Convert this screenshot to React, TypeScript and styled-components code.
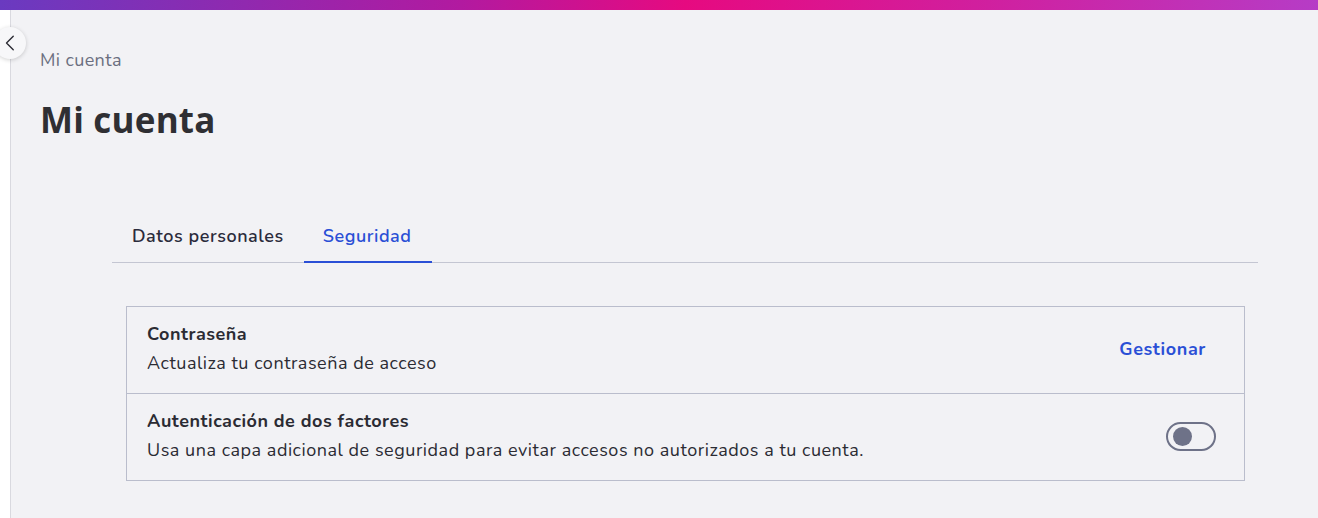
import React, { useState } from "react";
import styled, { createGlobalStyle } from "styled-components";

const GlobalStyle = createGlobalStyle`
  html, body { margin: 0; padding: 0; background: #f2f2f5; }
  body { font-family: "Nunito", Lato, "Open Sans", sans-serif; color: #2b2b33; }
  * { box-sizing: border-box; }
`;

const Shell = styled.div`
  width: 1318px;
  height: 518px;
  display: flex;
  flex-direction: column;
  overflow: hidden;
  background: #f2f2f5;
`;

const TopBar = styled.div`
  height: 10px;
  flex: none;
  background: linear-gradient(90deg, #6a3ac0 0%, #b21aa0 35%, #e60a80 52%, #d0209f 75%, #b63cc6 100%);
`;

const Body = styled.div`
  flex: 1;
  display: flex;
  position: relative;
`;

const SideStrip = styled.div`
  width: 11px;
  flex: none;
  background: #ffffff;
  border-right: 1px solid #d9d9df;
`;

const BackButton = styled.button`
  position: absolute;
  left: -6px;
  top: 17px;
  width: 32px;
  height: 32px;
  border-radius: 50%;
  border: none;
  background: #f7f7f9;
  box-shadow: 0 1px 4px rgba(0, 0, 0, 0.18);
  display: flex;
  align-items: center;
  justify-content: center;
  padding: 0 0 0 2px;
  color: #2b2b33;
  cursor: pointer;
`;

const Main = styled.main`
  flex: 1;
  padding: 38px 60px 0 29px;
  display: flex;
  flex-direction: column;
`;

const Breadcrumb = styled.div`
  font-size: 18px;
  line-height: 24px;
  letter-spacing: 0.4px;
  color: #6b6f80;
`;

const Title = styled.h1`
  margin: 26px 0 0 0;
  font-family: "Open Sans", Lato, sans-serif;
  font-size: 35px;
  line-height: 44px;
  font-weight: 700;
  color: #2f2f33;
  letter-spacing: 0.2px;
`;

const Content = styled.div`
  margin: 71px 0 0 72px;
  width: 1146px;
`;

const Tabs = styled.div`
  display: flex;
  border-bottom: 1px solid #c4c6d2;
  padding-left: 1px;
`;

const Tab = styled.button<{ $active?: boolean }>`
  background: none;
  border: none;
  font-family: inherit;
  font-size: 18px;
  font-weight: 600;
  letter-spacing: 0.55px;
  padding: 11px 20px 13px 19px;
  color: ${(p) => (p.$active ? "#2a4fd6" : "#2b2b3b")};
  border-bottom: 2px solid ${(p) => (p.$active ? "#2a4fd6" : "transparent")};
  margin-bottom: -1px;
  cursor: pointer;
`;

const Card = styled.div`
  margin: 43px 13px 0 14px;
  border: 1px solid #babdcc;
`;

const Row = styled.div`
  display: flex;
  align-items: center;
  justify-content: space-between;
  padding: 14px 28px 16px 20px;
  min-height: 86px;
  & + & {
    border-top: 1px solid #babdcc;
    min-height: 87px;
  }
`;

const RowText = styled.div`
  display: flex;
  flex-direction: column;
  gap: 4px;
`;

const RowTitle = styled.div`
  font-size: 18px;
  line-height: 25px;
  font-weight: 700;
  letter-spacing: 0.5px;
  color: #2b2b33;
`;

const RowDesc = styled.div`
  font-size: 18px;
  line-height: 25px;
  letter-spacing: 0.53px;
  color: #2b2b33;
`;

const LinkButton = styled.button`
  background: none;
  border: none;
  font-family: inherit;
  font-size: 18px;
  font-weight: 700;
  letter-spacing: 0.6px;
  color: #2a4fd6;
  padding: 8px 10px;
  cursor: pointer;
`;

const Toggle = styled.button<{ $on: boolean }>`
  width: 50px;
  height: 29px;
  border-radius: 15px;
  border: 2px solid #6e7288;
  background: ${(p) => (p.$on ? "#2a4fd6" : "transparent")};
  padding: 0 3px;
  display: flex;
  align-items: center;
  justify-content: ${(p) => (p.$on ? "flex-end" : "flex-start")};
  cursor: pointer;
`;

const Knob = styled.span<{ $on: boolean }>`
  width: 19px;
  height: 19px;
  border-radius: 50%;
  background: ${(p) => (p.$on ? "#ffffff" : "#6e7288")};
  margin-left: 2px;
`;

export default function App() {
  const [tab, setTab] = useState(1);
  const [twoFa, setTwoFa] = useState(false);
  return (
    <Shell>
      <GlobalStyle />
      <TopBar />
      <Body>
        <SideStrip />
        <BackButton aria-label="Volver">
          <svg width="18" height="18" viewBox="0 0 24 24" fill="none" stroke="#2b2b33" strokeWidth="1.8" strokeLinecap="round" strokeLinejoin="round">
            <path d="M15 3 L6 12 L15 21" />
          </svg>
        </BackButton>
        <Main>
          <Breadcrumb>Mi cuenta</Breadcrumb>
          <Title>Mi cuenta</Title>
          <Content>
            <Tabs>
              <Tab $active={tab === 0} onClick={() => setTab(0)}>Datos personales</Tab>
              <Tab $active={tab === 1} onClick={() => setTab(1)}>Seguridad</Tab>
            </Tabs>
            <Card>
              <Row>
                <RowText>
                  <RowTitle>Contraseña</RowTitle>
                  <RowDesc>Actualiza tu contraseña de acceso</RowDesc>
                </RowText>
                <LinkButton>Gestionar</LinkButton>
              </Row>
              <Row>
                <RowText>
                  <RowTitle>Autenticación de dos factores</RowTitle>
                  <RowDesc>Usa una capa adicional de seguridad para evitar accesos no autorizados a tu cuenta.</RowDesc>
                </RowText>
                <Toggle $on={twoFa} onClick={() => setTwoFa(!twoFa)} aria-label="Autenticación de dos factores">
                  <Knob $on={twoFa} />
                </Toggle>
              </Row>
            </Card>
          </Content>
        </Main>
      </Body>
    </Shell>
  );
}
